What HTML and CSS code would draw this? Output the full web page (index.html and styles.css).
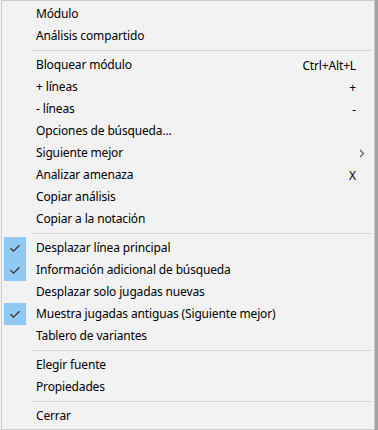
FILE: index.html
```html
<!DOCTYPE html>
<html lang="es">
<head>
<meta charset="utf-8">
<link rel="stylesheet" href="styles.css">
</head>
<body>
<div class="screen">
  <div class="gutter-left"></div>
  <div class="menu">
    <div class="item"><span class="check"></span><span class="label">Módulo</span></div>
    <div class="item"><span class="check"></span><span class="label">Análisis compartido</span></div>
    <div class="sep"></div>
    <div class="item"><span class="check"></span><span class="label">Bloquear módulo</span><span class="key">Ctrl+Alt+L</span></div>
    <div class="item"><span class="check"></span><span class="label">+ líneas</span><span class="key">+</span></div>
    <div class="item"><span class="check"></span><span class="label">- líneas</span><span class="key">-</span></div>
    <div class="item"><span class="check"></span><span class="label">Opciones de búsqueda...</span></div>
    <div class="item"><span class="check"></span><span class="label">Siguiente mejor</span><span class="sub"><svg width="6" height="9" viewBox="0 0 6 9"><path d="M1 1 L4.5 4.5 L1 8" fill="none" stroke="#555" stroke-width="1.1"/></svg></span></div>
    <div class="item"><span class="check"></span><span class="label">Analizar amenaza</span><span class="key">X</span></div>
    <div class="item"><span class="check"></span><span class="label">Copiar análisis</span></div>
    <div class="item"><span class="check"></span><span class="label">Copiar a la notación</span></div>
    <div class="sep"></div>
    <div class="item"><span class="check on"><svg width="12" height="9" viewBox="0 0 12 9"><path d="M1.5 4.2 L4.5 7.2 L10.5 1.2" fill="none" stroke="#333" stroke-width="1.3"/></svg></span><span class="label">Desplazar línea principal</span></div>
    <div class="item"><span class="check on"><svg width="12" height="9" viewBox="0 0 12 9"><path d="M1.5 4.2 L4.5 7.2 L10.5 1.2" fill="none" stroke="#333" stroke-width="1.3"/></svg></span><span class="label">Información adicional de búsqueda</span></div>
    <div class="item"><span class="check"></span><span class="label">Desplazar solo jugadas nuevas</span></div>
    <div class="item"><span class="check on"><svg width="12" height="9" viewBox="0 0 12 9"><path d="M1.5 4.2 L4.5 7.2 L10.5 1.2" fill="none" stroke="#333" stroke-width="1.3"/></svg></span><span class="label">Muestra jugadas antiguas (Siguiente mejor)</span></div>
    <div class="item"><span class="check"></span><span class="label">Tablero de variantes</span></div>
    <div class="sep"></div>
    <div class="item"><span class="check"></span><span class="label">Elegir fuente</span></div>
    <div class="item"><span class="check"></span><span class="label">Propiedades</span></div>
    <div class="sep"></div>
    <div class="item"><span class="check"></span><span class="label">Cerrar</span></div>
  </div>
  <div class="gutter-right"></div>
</div>
</body>
</html>
```

FILE: styles.css
```css
html, body {
  margin: 0;
  padding: 0;
  background: #f0f0f0;
}
.screen {
  display: flex;
  align-items: flex-start;
  width: 378px;
  height: 430px;
  overflow: hidden;
}
.gutter-left {
  width: 1px;
  height: 430px;
  background: #f4f4f4;
  flex: none;
}
.gutter-right {
  width: 3px;
  height: 430px;
  background: #a3a3a3;
  flex: none;
}
.menu {
  box-sizing: border-box;
  width: 374px;
  flex: none;
  background: #f2f2f2;
  border: 1px solid #cccccc;
  padding: 2px;
  font-family: "Noto Sans", "Open Sans", sans-serif;
  font-size: 12px;
  letter-spacing: -0.15px;
  color: #000;
  display: flex;
  flex-direction: column;
}
.item {
  height: 22px;
  display: flex;
  align-items: center;
}
.check {
  width: 22px;
  height: 22px;
  flex: none;
  margin-right: 10px;
  display: flex;
  align-items: center;
  justify-content: center;
}
.check.on {
  background: #90c8f6;
}
.label {
  flex: 1;
  white-space: nowrap;
  line-height: 22px;
}
.key {
  margin-right: 16px;
  white-space: nowrap;
}
.sub {
  margin-right: 7px;
  display: flex;
  align-items: center;
}
.sep {
  height: 7px;
  display: flex;
  align-items: center;
  padding-left: 28px;
}
.sep::after {
  content: "";
  flex: 1;
  height: 1px;
  background: #d7d7d7;
}
```
